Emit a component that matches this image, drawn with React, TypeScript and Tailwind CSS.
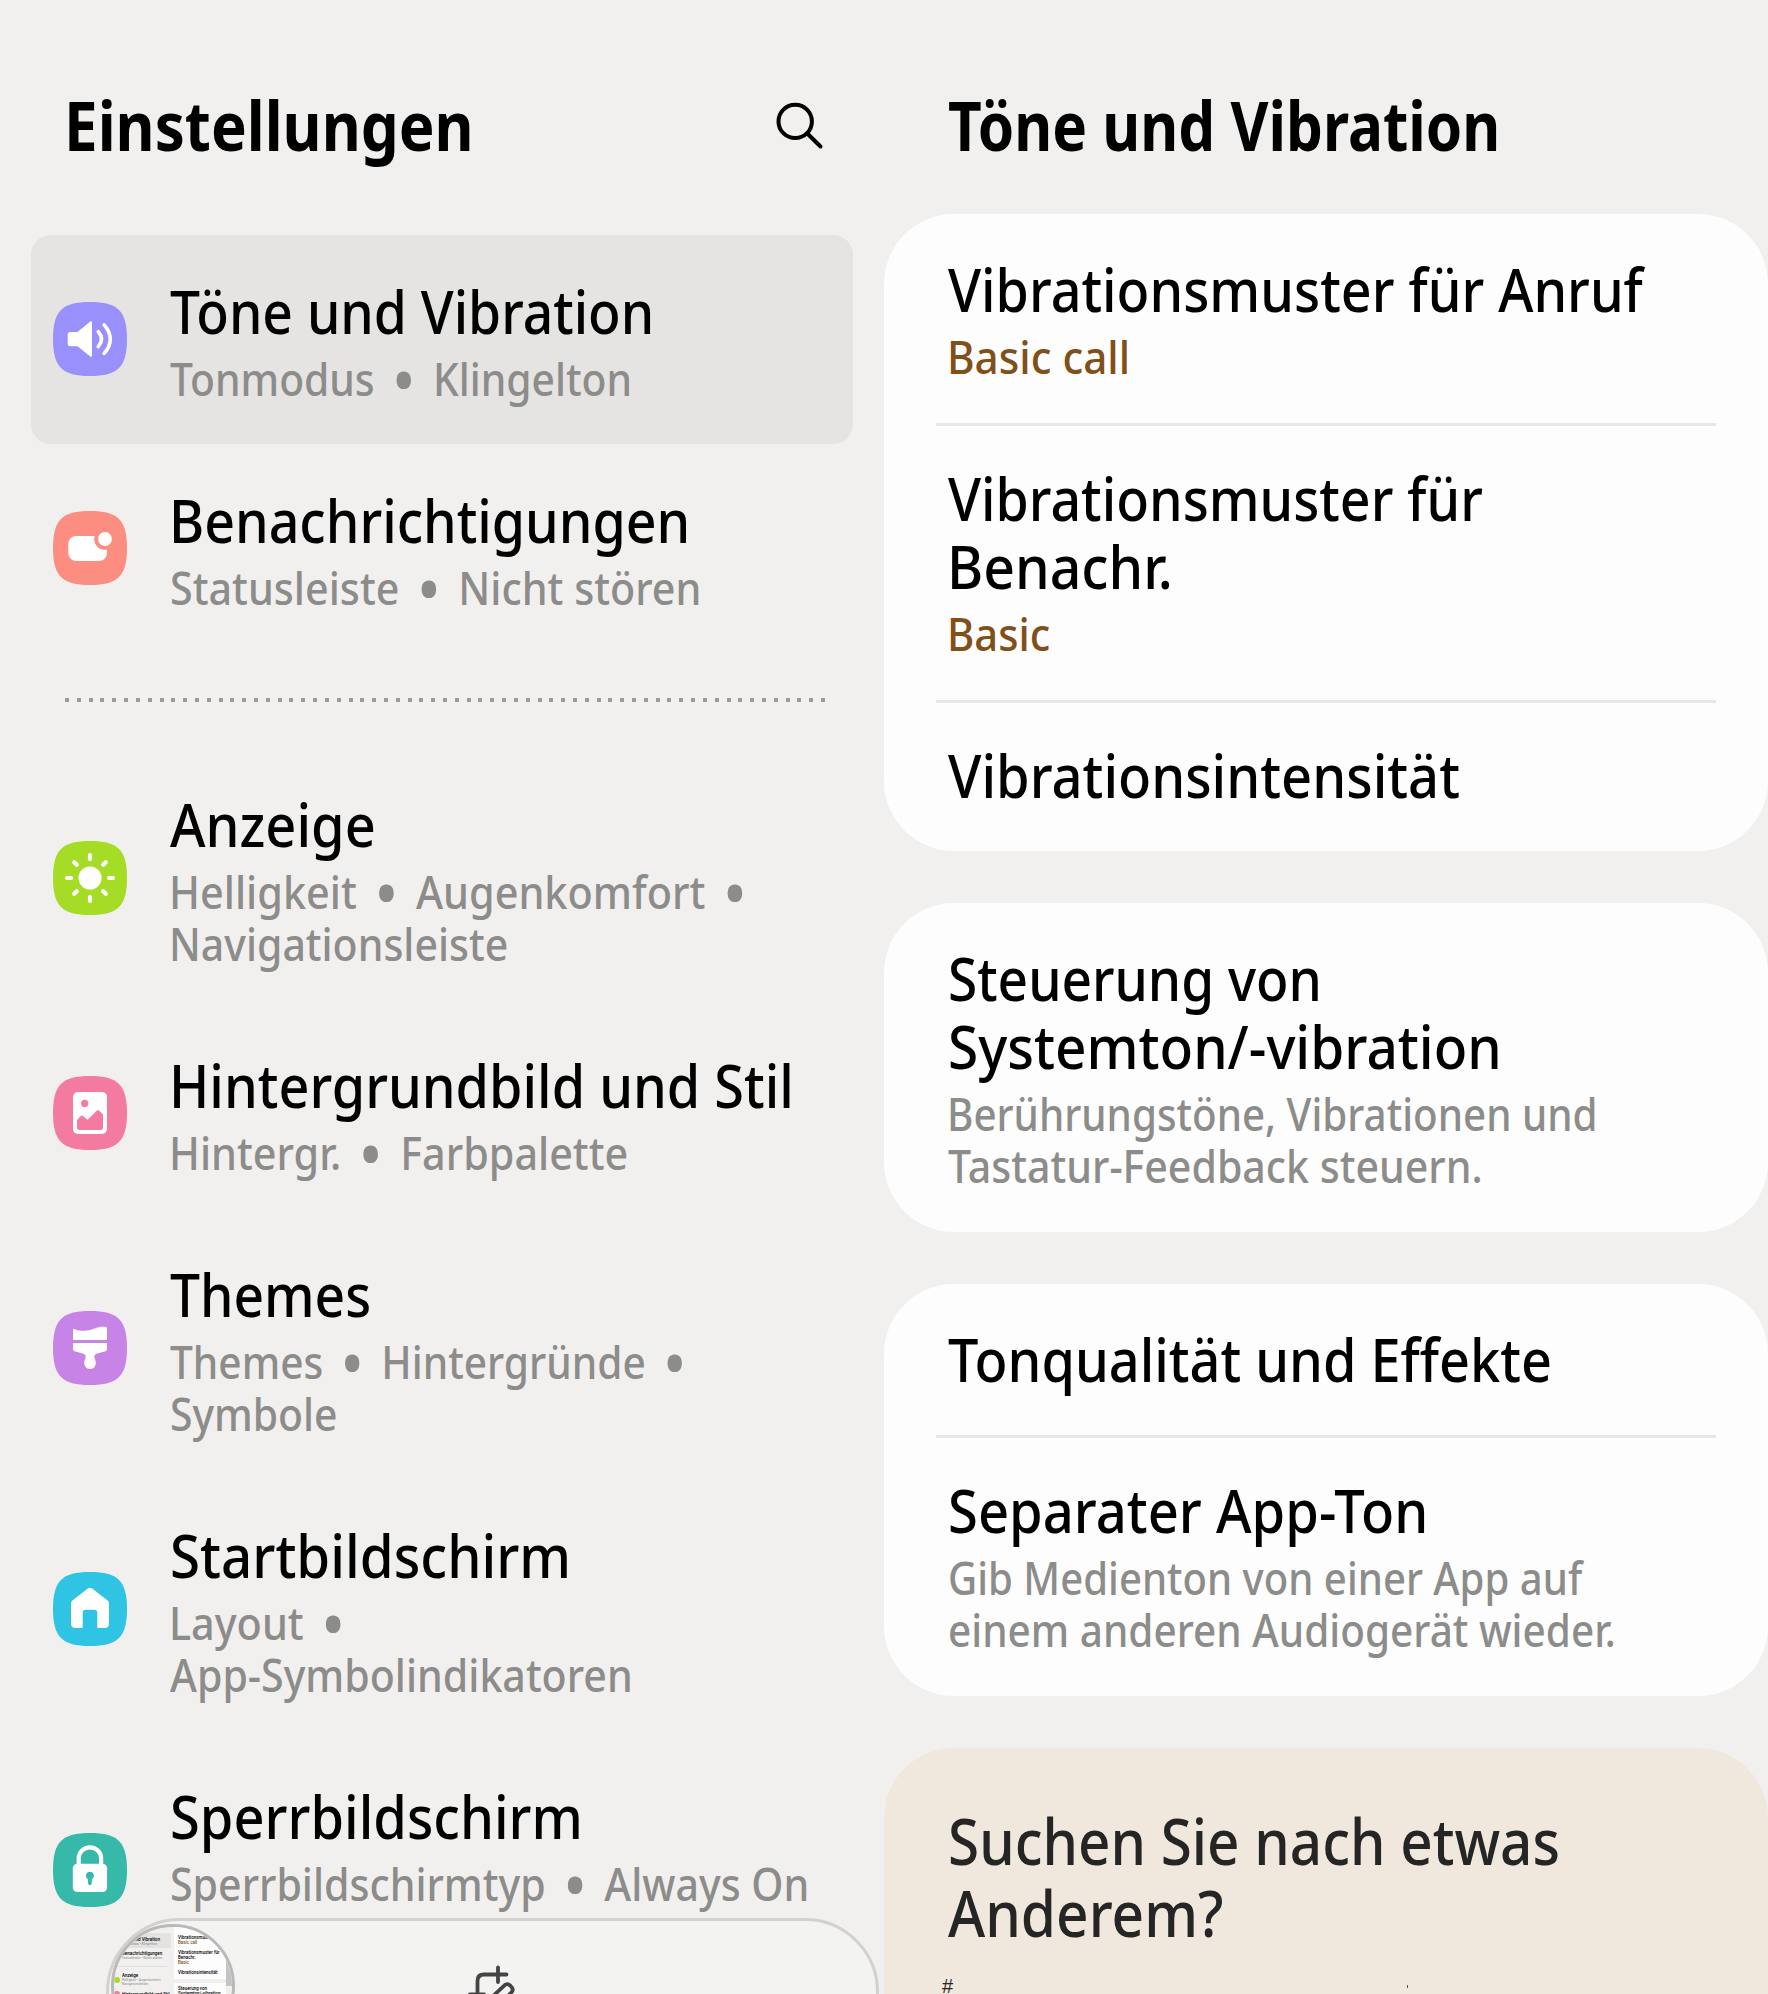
import React, { useLayoutEffect, useRef, useState } from 'react';
import clsx from 'clsx';

// ─── Types & data ──────────────────────────────────────────────────────────────

interface Line { text: string; width: number; }
interface SettingsEntry { icon: React.ReactNode; color: string; title: Line; sub: Line[]; active?: boolean; }
interface DetailEntry { title: Line[]; sub?: Line[]; accent?: boolean; }

// ─── Icons ─────────────────────────────────────────────────────────────────────

const SoundGlyph = (
  <>
    <path
      fill="#fff"
      d="M17.2 30H24.5L37.3 19.5Q39 18.6 39 20.4V53.6Q39 55.4 37.3 54.5L24.5 44.3H17.2Q14.7 44.3 14.7 41.8V32.5Q14.7 30 17.2 30Z"
    />
    <path d="M45.3 29.7Q51.8 37 45.3 44.6M51.2 22.8Q63.4 37.2 51.2 51.4" fill="none" stroke="#fff" strokeWidth="3.6" strokeLinecap="round" />
  </>
);

const NotificationGlyph = (
  <>
    <rect x="15.3" y="25" width="38.7" height="25" rx="8" fill="#fff" />
    <circle cx="52" cy="28" r="10.8" fill="#fb8e80" />
    <circle cx="52" cy="28" r="6.9" fill="#fff" />
  </>
);

const DisplayGlyph = (
  <>
    <circle cx="37" cy="37" r="11.5" fill="#fff" />
    <path
      d="M37 14.1V18.1M37 56V60M14.1 37H18.1M56 37H60M21.2 21.2L23.8 23.8M50.2 50.2L52.8 52.8M21.2 52.8L23.8 50.2M50.2 23.8L52.8 21.2"
      stroke="#fff"
      strokeWidth="4.2"
      strokeLinecap="round"
    />
  </>
);

const WallpaperGlyph = (
  <>
    <rect x="20" y="16" width="34" height="42" rx="5" fill="#fff" />
    <circle cx="31.7" cy="27.4" r="3.6" fill="#f47ba0" />
    <path d="M24 44L28 39.8Q28.8 39 29.6 39.8L34.6 43.8L44 34.6Q45 33.7 46 34.6L50 38.6V51.5Q50 54 47.5 54H26.5Q24 54 24 51.5Z" fill="#f47ba0" />
  </>
);

const ThemesGlyph = (
  <path
    fill="#fff"
    d="M20 18.6Q20 17.6 21 17.9C30 21.5 37 19.5 43 17C47 15.4 50 15.5 53 16.1Q54 16.3 54 17.3V29H20ZM20 32H54V38Q54 39.7 52.5 40.3L43.5 42.8Q40.6 44 41.5 46.8C42 48.4 42.8 50 42.8 52.3A5.8 5.8 0 0 1 31.2 52.3C31.2 50 32 48.4 32.5 46.8Q33.4 44 30.5 42.8L21.5 40.3Q20 39.7 20 38Z"
  />
);

const HomeGlyph = (
  <path
    fill="#fff"
    d="M34.8 16.6Q37 14.8 39.2 16.6L54.6 28.6Q56 29.8 56 31.6V51.5Q56 56 51.5 56H44.3V40.7Q44.3 37.7 41.3 37.7H32.7Q29.7 37.7 29.7 40.7V56H22.5Q18 56 18 51.5V31.6Q18 29.8 19.4 28.6Z"
  />
);

const LockGlyph = (
  <>
    <path d="M25.7 33V25.5A11.2 11.2 0 0 1 48.1 25.5V33" fill="none" stroke="#fff" strokeWidth="4.2" />
    <rect x="19.8" y="30.7" width="34.3" height="28.3" rx="4.5" fill="#fff" />
    <path d="M36.9 38.7A4 4 0 0 1 39 46.1L38.6 51Q36.9 53.4 35.2 51L34.8 46.1A4 4 0 0 1 36.9 38.7Z" fill="#36b9a9" />
  </>
);

const AppIcon: React.FC<{ color: string; children: React.ReactNode }> = ({ color, children }) => (
  <svg viewBox="0 0 74 74" className="-mt-px w-[74px] h-[74px] shrink-0">
    <path d="M37 0C65 0 74 9 74 37S65 74 37 74 0 65 0 37 9 0 37 0Z" fill={color} />
    {children}
  </svg>
);

const settings: SettingsEntry[] = [
  {
    icon: SoundGlyph, color: '#9a90fb', active: true,
    title: { text: 'Töne und Vibration', width: 484 },
    sub: [{ text: 'Tonmodus • Klingelton', width: 462 }],
  },
  {
    icon: NotificationGlyph, color: '#fb8e80',
    title: { text: 'Benachrichtigungen', width: 521 },
    sub: [{ text: 'Statusleiste • Nicht stören', width: 531 }],
  },
  {
    icon: DisplayGlyph, color: '#a5dc26',
    title: { text: 'Anzeige', width: 206 },
    sub: [{ text: 'Helligkeit • Augenkomfort •', width: 585 }, { text: 'Navigationsleiste', width: 339 }],
  },
  {
    icon: WallpaperGlyph, color: '#f47ba0',
    title: { text: 'Hintergrundbild und Stil', width: 625 },
    sub: [{ text: 'Hintergr. • Farbpalette', width: 459 }],
  },
  {
    icon: ThemesGlyph, color: '#c783e5',
    title: { text: 'Themes', width: 201 },
    sub: [{ text: 'Themes • Hintergründe •', width: 523 }, { text: 'Symbole', width: 168 }],
  },
  {
    icon: HomeGlyph, color: '#2fc4e3',
    title: { text: 'Startbildschirm', width: 401 },
    sub: [{ text: 'Layout •', width: 183 }, { text: 'App-Symbolindikatoren', width: 463 }],
  },
  {
    icon: LockGlyph, color: '#36b9a9',
    title: { text: 'Sperrbildschirm', width: 413 },
    sub: [{ text: 'Sperrbildschirmtyp • Always On', width: 639 }, { text: 'Display', width: 140 }],
  },
];

const groups: DetailEntry[][] = [
  [
    {
      title: [{ text: 'Vibrationsmuster für Anruf', width: 695 }],
      sub: [{ text: 'Basic call', width: 183 }], accent: true,
    },
    {
      title: [{ text: 'Vibrationsmuster für', width: 535 }, { text: 'Benachr.', width: 226 }],
      sub: [{ text: 'Basic', width: 103 }], accent: true,
    },
    { title: [{ text: 'Vibrationsintensität', width: 512 }] },
  ],
  [
    {
      title: [{ text: 'Steuerung von', width: 374 }, { text: 'Systemton/-vibration', width: 554 }],
      sub: [{ text: 'Berührungstöne, Vibrationen und', width: 651 }, { text: 'Tastatur-Feedback steuern.', width: 535 }],
    },
  ],
  [
    { title: [{ text: 'Tonqualität und Effekte', width: 604 }] },
    {
      title: [{ text: 'Separater App-Ton', width: 480 }],
      sub: [{ text: 'Gib Medienton von einer App auf', width: 634 }, { text: 'einem anderen Audiogerät wieder.', width: 668 }],
    },
  ],
];

// ─── FitText ───────────────────────────────────────────────────────────────────

// Condenses one line of text horizontally so that it fills the given width.
const FitText: React.FC<{ line: Line }> = ({ line }) => {
  const ref = useRef<HTMLSpanElement>(null);
  const [scale, setScale] = useState(0.89);

  useLayoutEffect(() => {
    if (ref.current) setScale(line.width / ref.current.offsetWidth);
  }, [line.width]);

  // Wide capitals have a larger left bearing, pull them back to the text edge
  const pulled = /^[BEHKLDN]/.test(line.text);

  return (
    <span className={clsx('block whitespace-nowrap', pulled && '-ml-[0.02em]')}>
      <span ref={ref} className="inline-block origin-left" style={{ transform: `scaleX(${scale})` }}>
        {line.text.split(' ').map((word, i) => (
          <React.Fragment key={i}>
            {i > 0 && ' '}
            {word === '•' ? <span className="inline-block mx-[8px] leading-[40px] h-[40px] text-[66px] align-[-8px]">•</span> : word}
          </React.Fragment>
        ))}
      </span>
    </span>
  );
};

// ─── Rows ──────────────────────────────────────────────────────────────────────

const SettingsRow: React.FC<{ entry: SettingsEntry }> = ({ entry }) => (
  <div className={clsx('mx-[31px] pl-[22px] flex items-center gap-[43px] rounded-[20px]', entry.active && 'bg-[#e5e4e2]')}>
    <AppIcon color={entry.color}>{entry.icon}</AppIcon>
    <div className="pt-[42px] pb-[39px] min-w-0">
      <h2 className="text-[60px] leading-[68px] font-medium text-black"><FitText line={entry.title} /></h2>
      <div className="mt-[8px] text-[45px] leading-[52px] font-medium text-[#8c8c8a]">
        {entry.sub.map((l) => <div key={l.text} className="h-[52px]"><FitText line={l} /></div>)}
      </div>
    </div>
  </div>
);

const DetailRow: React.FC<{ entry: DetailEntry; divided: boolean }> = ({ entry, divided }) => (
  <div className="px-[52px]">
    {divided && <div className="h-[3px] -mb-[3px] bg-[#e7e7e7]" />}
    <div className={clsx('pl-[12px] pt-[41px]', entry.sub ? 'pb-[40px]' : 'pb-[42px]')}>
      <h2 className="text-[60px] leading-[68px] font-medium text-black">
        {entry.title.map((l) => <FitText key={l.text} line={l} />)}
      </h2>
      {entry.sub && (
        <p className={clsx('mt-[8px] text-[45px] leading-[52px] font-medium', entry.accent ? 'text-[#805018]' : 'text-[#8c8c8a]')}>
          {entry.sub.map((l) => <FitText key={l.text} line={l} />)}
        </p>
      )}
    </div>
  </div>
);

// ─── Floating screenshot bar ───────────────────────────────────────────────────

const Thumbnail: React.FC = () => (
  <div className="ml-[2px] mt-[3px] w-[124px] h-[124px] shrink-0 rounded-full border-[3px] border-[#b9b9b8] bg-[#f1f0ee] overflow-hidden flex font-['Roboto',sans-serif] text-[4.5px] leading-[5px] font-medium text-black whitespace-nowrap">
    <div className="w-[57px] pt-[6px] shrink-0 overflow-hidden">
      <div className="h-[15px] pt-[4px] pl-[8px] bg-[#e3e2e0]">
        <p>Töne und Vibration</p>
        <p className="text-[3.5px] font-normal text-[#8c8c8a]">Tonmodus • Klingelton</p>
      </div>
      <div className="pt-[3px] pl-[8px]">
        <p>Benachrichtigungen</p>
        <p className="text-[3.5px] font-normal text-[#8c8c8a]">Statusleiste • Nicht stören</p>
      </div>
      <div className="mt-[5px] mx-[4px] h-px bg-[#e0dfdd]" />
      <div className="mt-[6px] flex items-center gap-[2px]">
        <span className="w-[6px] h-[6px] rounded-full bg-[#a5dc26] shrink-0" />
        <div>
          <p>Anzeige</p>
          <p className="text-[3.4px] leading-[4px] font-normal text-[#8c8c8a]">Helligkeit • Augenkomfort</p>
          <p className="text-[3.4px] leading-[4px] font-normal text-[#8c8c8a]">Navigationsleiste</p>
        </div>
      </div>
      <div className="mt-[5px] flex items-center gap-[2px]">
        <span className="w-[6px] h-[6px] rounded-full bg-[#f47ba0] shrink-0" />
        <p>Hintergrundbild und Stil</p>
      </div>
    </div>
    <div className="ml-[3px] w-[52px] shrink-0 overflow-hidden">
      <div className="h-[52px] pt-[8px] pl-[4px] bg-[#fdfdfd]">
        <p>Vibrationsmuster für Anruf</p>
        <p className="text-[#805018]">Basic call</p>
        <p className="mt-[5px]">Vibrationsmuster für</p>
        <p>Benachr.</p>
        <p className="text-[#805018]">Basic</p>
        <p className="mt-[5px]">Vibrationsintensität</p>
      </div>
      <div className="mt-[4px] h-[30px] pt-[3px] pl-[4px] bg-[#fdfdfd]">
        <p>Steuerung von</p>
        <p>Systemton/-vibration</p>
      </div>
    </div>
    <div className="mt-[29px] w-[6px] h-[30px] shrink-0 bg-[#c4c4c4]" />
  </div>
);

const CaptureBar: React.FC = () => (
  <div className="absolute left-[106px] top-[1918px] w-[773px] h-[150px] rounded-[74px] border-[3px] border-[#d2d1d0] bg-[#f3f3f2] flex">
    <Thumbnail />
    <svg viewBox="0 0 60 60" className="ml-[230px] mt-[39px] w-[60px] h-[60px]" fill="none" stroke="#444" strokeWidth="3.8" strokeLinecap="round" strokeLinejoin="round">
      <path d="M33 7.5V22M41.5 14.5H19Q12.5 14.5 12.5 21V42M5 34.5H19M27 37L39.5 25.3Q42.5 22.8 45.3 25.6L46.8 27.4Q48.8 30 46.3 32.5L34 45L26 47Z" />
    </svg>
  </div>
);

// ─── Page ──────────────────────────────────────────────────────────────────────

const App: React.FC = () => (
  <div className="relative w-[1768px] h-[1994px] overflow-hidden flex bg-[#f1f0ee] font-['Noto_Sans',sans-serif]">
    <section className="w-[884px] shrink-0">
      <header className="h-[235px] pt-[85px] pl-[65px] pr-[60px] flex items-start justify-between">
        <h1 className="w-[420px] text-[68px] leading-[80px] font-bold text-black"><FitText line={{ text: 'Einstellungen', width: 410 }} /></h1>
        <svg viewBox="0 0 60 60" className="mt-[10px] w-[60px] h-[60px]" fill="none" stroke="#000" strokeWidth="4" strokeLinecap="round">
          <circle cx="31.2" cy="26.4" r="16.7" />
          <path d="M43.3 38.5L56.5 51.5" />
        </svg>
      </header>
      {settings.slice(0, 2).map((e) => <SettingsRow key={e.title.text} entry={e} />)}
      <div className="mt-[45px] mb-[46px] ml-[65px] w-[760px] h-[4px] flex justify-between">
        {Array.from({ length: 65 }, (_, i) => <span key={i} className="w-[4px] h-[4px] bg-[#9b9b99]" />)}
      </div>
      {settings.slice(2).map((e) => <SettingsRow key={e.title.text} entry={e} />)}
    </section>

    <section className="w-[884px] shrink-0">
      <header className="h-[214px] pt-[85px] pl-[64px]">
        <h1 className="text-[68px] leading-[80px] font-bold text-black"><FitText line={{ text: 'Töne und Vibration', width: 552 }} /></h1>
      </header>
      <div className="flex flex-col gap-[52px]">
        {groups.map((rows, i) => (
          <div key={i} className="rounded-[70px] bg-[#fdfdfd]">
            {rows.map((r, j) => <DetailRow key={j} entry={r} divided={j > 0} />)}
          </div>
        ))}
        <div className="h-[400px] rounded-[70px] bg-[#f0e8dc] pt-[57px] pl-[64px] text-[#252525]">
          <h2 className="text-[63px] leading-[72px] font-medium">
            <FitText line={{ text: 'Suchen Sie nach etwas', width: 612 }} />
            <FitText line={{ text: 'Anderem?', width: 275 }} />
          </h2>
          <div className="mt-[25px] -ml-[6px] flex items-start font-['Liberation_Sans',sans-serif] text-[20px] leading-[24px]">
            <span className="w-[465px]">#</span>
            <span className="mt-[11px] w-px h-[3px] bg-[#555]" />
          </div>
        </div>
      </div>
    </section>

    <CaptureBar />
  </div>
);

export default App;
